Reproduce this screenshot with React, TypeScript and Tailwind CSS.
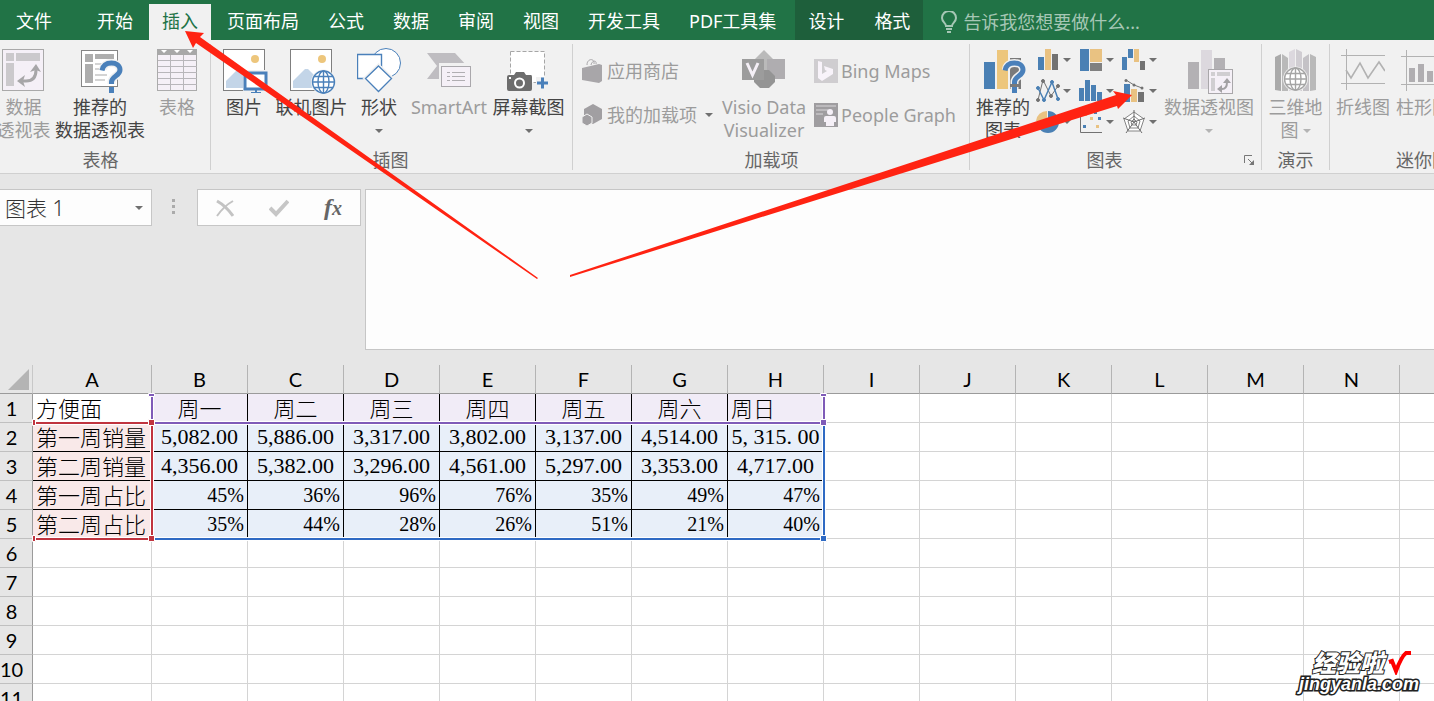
import type { ReactNode } from "react";
import { clsx } from "clsx";

const tabs = ["开始", "插入", "页面布局", "公式", "数据", "审阅", "视图", "开发工具", "PDF工具集"];
const contextTabs = ["设计", "格式"];

const columns = ["A", "B", "C", "D", "E", "F", "G", "H", "I", "J", "K", "L", "M", "N", "O"];

const sheet = [
  ["方便面", "周一", "周二", "周三", "周四", "周五", "周六", "周日"],
  ["第一周销量", "5,082.00", "5,886.00", "3,317.00", "3,802.00", "3,137.00", "4,514.00", "5, 315. 00"],
  ["第二周销量", "4,356.00", "5,382.00", "3,296.00", "4,561.00", "5,297.00", "3,353.00", "4,717.00"],
  ["第一周占比", "45%", "36%", "96%", "76%", "35%", "49%", "47%"],
  ["第二周占比", "35%", "44%", "28%", "26%", "51%", "21%", "40%"],
];

const rowNumbers = [1, 2, 3, 4, 5, 6, 7, 8, 9, 10, 11];

function Caret({ muted = false }: { muted?: boolean }) {
  return (
    <svg width="8" height="4" viewBox="0 0 8 4" className="shrink-0" aria-hidden>
      <path d="M0 0H8L4 4Z" fill={muted ? "#b4b4b4" : "#707070"} />
    </svg>
  );
}

type BigButtonProps = {
  icon: ReactNode;
  lines: ReactNode[];
  muted?: boolean;
  className?: string;
};

function BigButton({ icon, lines, muted, className }: BigButtonProps) {
  return (
    <button
      type="button"
      className={clsx(
        "flex shrink-0 flex-col items-center pt-1 whitespace-nowrap leading-[23px]",
        muted ? "text-[#9c9c9c]" : "text-[#444444]",
        className,
      )}
    >
      <span className="flex h-12 items-start">{icon}</span>
      {lines.map((line, i) => (
        <span key={i} className="flex h-[23px] items-center justify-center gap-1">
          {line}
        </span>
      ))}
    </button>
  );
}

type GroupProps = {
  label: string;
  children: ReactNode;
  className?: string;
  launcher?: boolean;
};

function Group({ label, children, className, launcher }: GroupProps) {
  return (
    <section
      aria-label={label}
      className={clsx("relative flex h-[126px] shrink-0 flex-col border-r border-[#d0d0d0]", className)}
    >
      <div className="flex h-[102px] shrink-0">{children}</div>
      <p className="mt-1 text-center leading-5 text-[#666666]">{label}</p>
      {launcher && (
        <button type="button" aria-label="图表选项" className="absolute right-[6px] bottom-1">
          <svg width="11" height="11" viewBox="0 0 11 11" fill="none" stroke="#777">
            <path d="M.5 8V.5H8M4 4l4.500 4.500" />
            <path d="M10 5v5H5Z" fill="#777" stroke="none" />
          </svg>
        </button>
      )}
    </section>
  );
}

function PivotIcon() {
  return (
    <svg width="43" height="44" viewBox="0 0 43 44">
      <rect x=".5" y="1.500" width="41" height="41" fill="#f5f0f7" stroke="#a9a9a9" />
      <path d="M4 5h8v8H4zM14 5h24v8H14zM4 15h8v23H4z" fill="#cbc9cc" />
      <path d="M20 33h4c7 0 10-4 10-11" fill="none" stroke="#a7a6a8" strokeWidth="3" />
      <path d="M15 33l8-6-2 6 2 6zM34 16l-6 8 6-2 5 2z" fill="#a7a6a8" />
    </svg>
  );
}

function QuestionMark({ x, y }: { x: number; y: number }) {
  return (
    <g transform={`translate(${x} ${y})`} fill="none">
      <path d="M3 10C3 5 7 3 11.500 3S20 5.500 20 10c0 6-8.500 6-8.500 12v2M11.500 27v6" stroke="#f1f1f1" strokeWidth="8" />
      <path d="M2 10.500C3 5 7 3 11.500 3S20 5.500 20 10c0 6-8.500 6-8.500 12v2" stroke="#4a80ba" strokeWidth="5" />
      <path d="M9 27h5v6H9z" fill="#4a80ba" />
    </g>
  );
}

function RecommendedPivotIcon() {
  return (
    <svg width="40" height="46" viewBox="0 0 40 46" className="overflow-visible">
      <rect x="1.500" y="2.500" width="36" height="36" fill="#fff" stroke="#858585" />
      <path d="M5 6h8v8H5zM15 6h19v5H15zM5 16h8v19H5z" fill="#adadad" />
      <path d="M15 16h16M15 21h12M15 27h12M15 32h10" stroke="#d4d4d4" strokeWidth="2" />
      <QuestionMark x={20} y={12} />
    </svg>
  );
}

function TableIcon() {
  return (
    <svg width="41" height="44" viewBox="0 0 41 44">
      <rect x=".5" y="1.500" width="39" height="41" fill="#f5f0f7" stroke="#ababab" />
      <path d="M0 1h40v6H0z" fill="#a8a8a8" />
      <path d="M4 2h6L7 5zM17 2h6l-3 3zM30 2h6l-3 3z" fill="#fff" />
      <path d="M1 12.500h39M1 18.500h39M1 24.500h39M1 30.500h39M1 36.500h39M13.500 7v35M26.500 7v35" stroke="#b8b6ba" />
    </svg>
  );
}

function Landscape() {
  return (
    <>
      <rect x=".5" y="1.500" width="41" height="41" fill="#fff" stroke="#7f7f7f" />
      <path d="M3 40V33L15 21l3 0L31 34v6z" fill="#c3d5e8" />
      <circle cx="32" cy="11" r="4" fill="#edc67c" />
    </>
  );
}

function PictureIcon() {
  return (
    <svg width="42" height="46" viewBox="0 0 42 46" className="overflow-visible">
      <Landscape />
      <path d="M20 22h26v23H20z" fill="#f1f1f1" />
      <path d="M22 25h21v16H22z" fill="#fff" stroke="#4a80ba" strokeWidth="3" />
      <path d="M32 41h2v3h4v1H28v-1h4z" fill="#4a80ba" />
    </svg>
  );
}

function Globe({ cx, cy, r, color }: { cx: number; cy: number; r: number; color: string }) {
  return (
    <g fill="none" stroke={color} strokeWidth="1.400">
      <circle cx={cx} cy={cy} r={r + 1.5} fill="#f1f1f1" stroke="none" />
      <circle cx={cx} cy={cy} r={r} fill="#fff" />
      <ellipse cx={cx} cy={cy} rx={r / 2} ry={r} />
      <path d={`M${cx - r} ${cy}h${2 * r}M${cx} ${cy - r}v${2 * r}M${cx - r + 1.5} ${cy - r / 2}h${2 * r - 3}M${cx - r + 1.5} ${cy + r / 2}h${2 * r - 3}`} />
    </g>
  );
}

function OnlinePictureIcon() {
  return (
    <svg width="44" height="46" viewBox="0 0 44 46" className="overflow-visible">
      <Landscape />
      <Globe cx={33.5} cy={34} r={11} color="#4a80ba" />
    </svg>
  );
}

function ShapesIcon() {
  return (
    <svg width="44" height="46" viewBox="0 0 44 46" fill="#fff" stroke="#4a80ba">
      <circle cx="29" cy="15" r="14.500" />
      <path d="M.5 6.500h24v24H.5z" strokeWidth="1.400" />
      <path d="M21.500 15.500L37 30.500 21.500 46 6 30.500z" fill="#f1f1f1" stroke="#f1f1f1" />
      <path d="M21.500 18L34.500 30.500 21.500 43.500 8.500 30.500z" strokeWidth="1.300" />
    </svg>
  );
}

function SmartArtIcon() {
  return (
    <svg width="45" height="44" viewBox="0 0 45 44">
      <path d="M0 5h28l12 13-12 13H0l10-13z" fill="#bfbdc1" />
      <path d="M12 15h34v26H12z" fill="#f1f1f1" />
      <rect x="14.500" y="18.500" width="29" height="20" fill="#f5f0f7" stroke="#aaa8ac" />
      <path d="M20 24.500h3M20 28.500h3M20 32.500h3M25 24.500h13M25 28.500h13M25 32.500h13" stroke="#b0aeb2" />
    </svg>
  );
}

function ScreenshotIcon() {
  return (
    <svg width="43" height="44" viewBox="0 0 43 44">
      <rect x="3.500" y="3.500" width="34" height="31" fill="#fff" stroke="#a6a6a6" strokeDasharray="4 2" />
      <path d="M29 29h14v15H29z" fill="#f1f1f1" />
      <path d="M0 29q0-2 2-2h5l2-3h8l2 3h5q1 0 1 2v12q0 2-2 2H2q-2 0-2-2z" fill="#6d6d6d" />
      <circle cx="12.500" cy="35" r="4.500" fill="#6d6d6d" stroke="#fff" strokeWidth="2" />
      <path d="M2 29h2v2H2z" fill="#fff" />
      <path d="M30 35h11M35.500 29.500v11" stroke="#4a80ba" strokeWidth="3" />
    </svg>
  );
}

function StoreIcon() {
  return (
    <svg width="21" height="26" viewBox="0 0 21 26">
      <path d="M5 7c0-7 8-7 7-1M9 7c1-5 6-5 5-1" fill="none" stroke="#a8a6a9" />
      <path d="M0 10l17-4 3 1v16l-3 2-17-3z" fill="#a8a6a9" />
    </svg>
  );
}

function AddInIcon() {
  return (
    <svg width="21" height="24" viewBox="0 0 21 24" fill="#a19fa2">
      <path d="M11 1l9 5v10l-9 5-9-5V6z" />
      <path d="M5 11l5 3v6l-5 3-5-3v-6z" stroke="#f1f1f1" />
    </svg>
  );
}

function VisioIcon() {
  return (
    <svg width="44" height="42" viewBox="0 0 44 42">
      <path d="M22 2l12 12-12 12-12-12z" fill="#bababa" />
      <path d="M25 11h18v20H25z" fill="#afadb0" />
      <path d="M18 22h9l6 6v6l-6 6h-9l-6-6v-6z" fill="#949494" />
      <path d="M0 11h22v21H0z" fill="#9c9c9c" />
      <path d="M5 15l5.500 12L16 15" fill="none" stroke="#f5f0f7" strokeWidth="3" />
    </svg>
  );
}

function BingIcon() {
  return (
    <svg width="24" height="24" viewBox="0 0 24 24">
      <path d="M0 0h24v24H0z" fill="#cfcdd0" />
      <path d="M4 2l4 1v12l5-3-2-1-1-4 9 3v5L8 22l-4-3z" fill="#f8f3fa" />
    </svg>
  );
}

function PeopleGraphIcon() {
  return (
    <svg width="24" height="24" viewBox="0 0 24 24">
      <path d="M0 0h24v24H0z" fill="#9f9da0" />
      <path d="M2 2h20v2H2zM2 6h12v2H2zM2 10h7v2H2z" fill="#bcbabd" />
      <circle cx="16" cy="9" r="3" fill="#f5f0f7" />
      <path d="M12 13h8q2 0 2 2v4h-2v4h-8v-4h-2v-4q0-2 2-2z" fill="#f5f0f7" />
    </svg>
  );
}

function RecommendedChartIcon() {
  return (
    <svg width="40" height="46" viewBox="0 0 40 46" className="overflow-visible">
      <path d="M1 14h11v27H1z" fill="#4a80b4" />
      <path d="M14 2h11v39H14z" fill="#edc67c" />
      <path d="M27 10h11v31H27z" fill="#7a7a7a" />
      <QuestionMark x={20} y={12} />
    </svg>
  );
}

const chartKinds: { name: string; art: ReactNode }[] = [
  {
    name: "柱形图",
    art: (
      <>
        <path d="M1 9h6v13H1z" fill="#4a80b4" />
        <path d="M8 1h6v21H8z" fill="#e9c282" />
        <path d="M15 6h6v16h-6z" fill="#727272" />
      </>
    ),
  },
  {
    name: "树状图",
    art: (
      <>
        <path d="M0 1h9v22H0z" fill="#4a80b4" />
        <path d="M10 1h12v13H10z" fill="#e9c282" />
        <path d="M10 15h12v8H10z" fill="#808080" />
      </>
    ),
  },
  {
    name: "瀑布图",
    art: (
      <>
        <path d="M-1 9h5v13h-5zM5 1h5v9H5z" fill="#4a80b4" />
        <path d="M11 1h5v13h-5z" fill="#e9c282" />
        <path d="M17 13h5v9h-5z" fill="#727272" />
      </>
    ),
  },
  {
    name: "折线图",
    art: (
      <>
        <g fill="#727272" stroke="#727272">
          <path d="M1 21L6 1l8 16 7-10" fill="none" />
          <circle cx="1" cy="21" r="1.500" /><circle cx="6" cy="2" r="1.500" /><circle cx="14" cy="17" r="1.500" /><circle cx="21" cy="7" r="1.500" />
        </g>
        <g fill="#4a80b4" stroke="#4a80b4">
          <path d="M1 9l6 12 8-18 6 17" fill="none" strokeWidth="1.500" />
          <circle cx="1" cy="9" r="1.500" /><circle cx="7" cy="21" r="1.500" /><circle cx="15" cy="3" r="1.500" /><circle cx="21" cy="20" r="1.500" />
        </g>
      </>
    ),
  },
  {
    name: "直方图",
    art: <path d="M-1 9h5v13h-5zM5 1h5v21H5zM11 6h5v16h-5zM17 13h5v9h-5z" fill="#4a80b4" />,
  },
  {
    name: "组合图",
    art: (
      <>
        <path d="M1 5h6v18H1z" fill="#4a80b4" />
        <path d="M8 10h6v13H8z" fill="#e9c282" />
        <path d="M15 13h6v10h-6z" fill="#727272" />
        <path d="M3 1l8 5 8 3" fill="none" stroke="#727272" />
        <g fill="#727272"><circle cx="3" cy="1.500" r="1.500" /><circle cx="11" cy="6" r="1.500" /><circle cx="19" cy="9" r="1.500" /></g>
      </>
    ),
  },
  {
    name: "饼图",
    art: (
      <>
        <path d="M11 1a11 11 0 1 1-11 11h11z" fill="#4a80b4" />
        <path d="M10 11H-1A11 11 0 0 1 10 1z" fill="#e9c282" />
      </>
    ),
  },
  {
    name: "散点图",
    art: (
      <>
        <path d="M.5 1v21.500H22" fill="none" stroke="#727272" />
        <path d="M14 1h3v3h-3zM3 15h3v3H3zM18 7h3v3h-3z" fill="#4a80b4" />
        <path d="M4 3h3v3H4zM10 7h3v3h-3zM16 15h3v3h-3z" fill="#e9c282" />
      </>
    ),
  },
  {
    name: "雷达图",
    art: (
      <g fill="none" stroke="#858585">
        <path d="M11 2l10 7-4 12H5L1 9z" fill="#fff" />
        <path d="M11 6l6 5-2 7H7l-2-7zM11 9l3 3-1 3H9l-1-3z" />
        <path d="M11 0v12L0 8M11 12l11-4M11 12L3 23M11 12l8 11" stroke="#6b6b6b" />
      </g>
    ),
  },
];

function PivotChartIcon() {
  return (
    <svg width="42" height="46" viewBox="0 0 42 46" className="overflow-visible">
      <path d="M0 14h11v27H0z" fill="#b3b1b4" />
      <path d="M13 2h11v39H13z" fill="#dcd8de" />
      <path d="M26 10h11v31H26z" fill="#b3b1b4" />
      <rect x="20.500" y="21.500" width="24" height="24" fill="#f5f0f7" stroke="#a9a7aa" />
      <path d="M23 24h4v4h-4zM29 24h13v4H29zM23 30h4v13h-4z" fill="#d0ced1" />
      <path d="M31 41h3c4 0 5-3 5-7" fill="none" stroke="#a3a1a4" strokeWidth="2" />
      <path d="M29 41l5-4v8zM39 30l-4 5h8z" fill="#a3a1a4" />
    </svg>
  );
}

function MapIcon() {
  return (
    <svg width="42" height="44" viewBox="0 0 42 44">
      <path d="M0 9l6-3v37l-6-1z" fill="#aaa" /><path d="M7 6l6 4v33H7z" fill="#b9b9b9" />
      <path d="M14 4l6-3v42h-6z" fill="#dcd8de" /><path d="M21 1l6 3v39h-6z" fill="#d0cdd2" />
      <path d="M28 10l6-4v37h-6z" fill="#c4c2c6" /><path d="M35 6l6 3v33l-6 1z" fill="#b9b9b9" />
      <Globe cx={20.5} cy={31} r={11} color="#a5a5a5" />
    </svg>
  );
}

function SparkLineIcon() {
  return (
    <svg width="44" height="44" viewBox="0 0 44 44" fill="none" stroke="#b2b2b2">
      <path d="M0 7.500h44M0 35.500h44M5.500 1v41" />
      <path d="M5 22l5 8 9-15 8 15 11-16 6 9" strokeWidth="1.600" />
    </svg>
  );
}

function SparkColumnIcon() {
  return (
    <svg width="44" height="44" viewBox="0 0 44 44" fill="none" stroke="#b2b2b2">
      <path d="M0 8.500h44M0 36.500h44M5.500 2v41" />
      <path d="M8 20h6v14H8zM17 16h6v18h-6zM26 23h6v11h-6z" fill="#b0aeb1" stroke="none" />
    </svg>
  );
}

function TabBar() {
  return (
    <nav className="flex h-10 shrink-0 items-end overflow-hidden bg-[#217346] leading-[22px] text-white">
      <button type="button" className="h-9 w-[84px] shrink-0 pr-4 pb-[2px]">文件</button>
      <div className="flex gap-[3px]">
        {tabs.map((tab) => (
          <button
            key={tab}
            type="button"
            className={clsx("h-9 shrink-0 px-[13px] pb-[2px]", tab === "插入" && "bg-[#f1f1f1] text-[#217346]")}
          >
            {tab}
          </button>
        ))}
      </div>
      <div className="ml-[6px] flex h-10 shrink-0 items-end gap-1 bg-[#1e5f3b]">
        {contextTabs.map((tab) => (
          <button key={tab} type="button" className="h-9 px-[13px] pb-[2px]">{tab}</button>
        ))}
      </div>
      <label className="ml-[18px] flex h-9 items-center gap-[6px]">
        <svg width="16" height="22" viewBox="0 0 16 22" fill="none" stroke="#a6c7b5" strokeWidth="2" aria-hidden>
          <path d="M5 15c0-3-4-4-4-8a7 7 0 0 1 14 0c0 4-4 5-4 8z" />
          <path d="M5 18h6M6 21h4" />
        </svg>
        <input
          aria-label="操作说明搜索"
          placeholder="告诉我您想要做什么..."
          className="w-[200px] bg-transparent outline-none placeholder:text-[#a6c7b5]"
        />
      </label>
    </nav>
  );
}

function Ribbon() {
  return (
    <div className="flex h-[134px] shrink-0 overflow-hidden border-b border-[#d0d0d0] bg-[#f1f1f1] pt-1">
      <Group label="表格" className="w-[211px] pr-[9px]">
        <BigButton muted className="w-[47px]" icon={<PivotIcon />} lines={["数据", "透视表"]} />
        <BigButton className="w-[106px]" icon={<RecommendedPivotIcon />} lines={["推荐的", "数据透视表"]} />
        <BigButton muted className="w-12" icon={<TableIcon />} lines={["表格"]} />
      </Group>

      <Group label="插图" className="w-[362px] pr-1 pl-[2px]">
        <BigButton className="w-[62px]" icon={<PictureIcon />} lines={["图片"]} />
        <BigButton className="w-[73px]" icon={<OnlinePictureIcon />} lines={["联机图片"]} />
        <BigButton className="w-[62px]" icon={<ShapesIcon />} lines={["形状", <Caret />]} />
        <BigButton muted className="w-[78px]" icon={<SmartArtIcon />} lines={["SmartArt"]} />
        <BigButton className="w-[81px]" icon={<ScreenshotIcon />} lines={["屏幕截图", <Caret />]} />
      </Group>

      <Group label="加载项" className="w-[397px] pr-2 pl-[9px] text-[#9c9c9c]">
        <div className="flex w-[134px] shrink-0 flex-col pt-[5px]">
          <button type="button" className="flex h-11 items-center gap-1 whitespace-nowrap"><StoreIcon />应用商店</button>
          <button type="button" className="flex h-11 items-center gap-1 whitespace-nowrap">
            <AddInIcon />我的加载项<span className="pl-1"><Caret /></span>
          </button>
        </div>
        <BigButton muted className="w-24" icon={<VisioIcon />} lines={["Visio Data", "Visualizer"]} />
        <div className="flex flex-col pt-[5px] pl-[2px]">
          <button type="button" className="flex h-11 items-center gap-[3px] whitespace-nowrap"><BingIcon />Bing Maps</button>
          <button type="button" className="flex h-11 items-center gap-[3px] whitespace-nowrap"><PeopleGraphIcon />People Graph</button>
        </div>
      </Group>

      <Group label="图表" launcher className="w-[292px] pr-[22px]">
        <BigButton className="ml-[3px] w-[60px]" icon={<RecommendedChartIcon />} lines={["推荐的", "图表"]} />
        <div className="ml-1 grid w-[129px] shrink-0 grid-cols-3 content-start">
          {chartKinds.map((kind) => (
            <button key={kind.name} type="button" aria-label={kind.name} className="flex h-[31px] items-center gap-1">
              <svg width="22" height="24" viewBox="0 0 22 24" className="overflow-visible">{kind.art}</svg>
              <Caret />
            </button>
          ))}
        </div>
        <BigButton muted className="-ml-1 w-[94px]" icon={<PivotChartIcon />} lines={["数据透视图", <Caret muted />]} />
      </Group>

      <Group label="演示" className="w-[68px] items-center">
        <BigButton muted className="w-[66px]" icon={<MapIcon />} lines={["三维地", <>图<Caret muted /></>]} />
      </Group>

      <Group label="迷你图" className="w-[185px] pl-[2px]">
        <BigButton muted className="w-[62px]" icon={<SparkLineIcon />} lines={["折线图"]} />
        <BigButton muted className="w-[58px]" icon={<SparkColumnIcon />} lines={["柱形图"]} />
      </Group>
    </div>
  );
}

function FormulaBar() {
  return (
    <div className="flex shrink-0 items-start py-[15px]">
      <div className="flex h-[37px] w-[152px] shrink-0 items-center border border-l-0 border-[#c6c6c6] bg-[#fdfdfd] pr-2 pl-[5px]">
        <input aria-label="名称框" defaultValue="图表 1" className="w-full min-w-0 bg-transparent text-[21px] font-light text-[#333333] outline-none" />
        <Caret />
      </div>
      <svg width="45" height="37" viewBox="0 0 45 37" fill="#ababab" className="shrink-0" aria-hidden>
        <path d="M20 10h3v3h-3zM20 16h3v3h-3zM20 22h3v3h-3z" />
      </svg>
      <div className="flex h-[37px] w-[164px] shrink-0 items-center justify-between border border-[#c6c6c6] bg-[#fdfdfd] px-[18px]">
        <button type="button" aria-label="取消">
          <svg width="18" height="18" viewBox="0 0 18 18" fill="none" stroke="#c3c3c3">
            <path d="M1 2q9 5 16 15" strokeWidth="3" /><path d="M17 2Q8 7 1 17" strokeWidth="2" />
          </svg>
        </button>
        <button type="button" aria-label="输入">
          <svg width="20" height="18" viewBox="0 0 20 18" fill="none" stroke="#c6c6c6" strokeWidth="4">
            <path d="M1 9l6 6L19 2" />
          </svg>
        </button>
        <button type="button" aria-label="插入函数" className="font-['Liberation_Serif',serif] text-2xl leading-6 font-bold text-[#666666] italic">
          f<span className="text-xl">x</span>
        </button>
      </div>
      <textarea aria-label="编辑栏" className="ml-1 block h-[161px] min-w-0 flex-1 resize-none border border-r-0 border-[#c6c6c6] bg-[#fdfdfd] outline-none" />
    </div>
  );
}

function cellClass(row: number, col: number) {
  if (row > 4 || col > 7) return "border-[#d4d4d4]";

  const borders = clsx(
    row > 0 ? "border-b-black" : "border-b-[#d4d4d4]",
    col > 0 ? "border-r-black" : "border-r-[#d4d4d4]",
  );
  if (col === 0) {
    return clsx(borders, "pl-[3px] text-left text-[22px] leading-7 font-light", row > 0 && "bg-[#f9e9e9]");
  }
  if (row === 0) {
    return clsx(borders, "bg-[#f1ecf7] text-[22px] leading-7 font-light", col === 7 ? "pl-[3px] text-left" : "text-center");
  }
  return clsx(
    borders,
    "bg-[#e8eff9] font-['Liberation_Serif',serif] leading-7",
    row > 2 ? "pr-[3px] text-right text-xl" : "text-center text-[22px]",
  );
}

function Sheet() {
  return (
    <div className="relative">
      <table className="w-[1496px] table-fixed border-separate border-spacing-0 bg-white text-black">
        <colgroup>
          <col className="w-[33px]" />
          <col className="w-[119px]" />
          {columns.slice(1).map((name) => <col key={name} className="w-24" />)}
        </colgroup>
        <thead>
          <tr className="h-[29px] bg-[#e6e6e6] font-['Lato',sans-serif] text-xl leading-7">
            <th className="border-r border-b border-[#9b9b9b] border-r-[#c8c8c8] p-0">
              <svg width="21" height="21" viewBox="0 0 21 21" className="ml-2" aria-hidden>
                <path d="M21 0v21H0z" fill="#b4b4b4" />
              </svg>
            </th>
            {columns.map((name) => (
              <th key={name} scope="col" className="border-r border-b border-[#9b9b9b] border-r-[#b4b4b4] p-0 font-normal">
                {name}
              </th>
            ))}
          </tr>
        </thead>
        <tbody>
          {rowNumbers.map((num, row) => (
            <tr key={num} className="h-[29px]">
              <th scope="row" className="border-r border-b border-r-[#9b9b9b] border-b-[#c0c0c0] bg-[#e6e6e6] p-0 pr-[9px] font-['Lato',sans-serif] text-xl leading-7 font-normal">
                {num}
              </th>
              {columns.map((name, col) => (
                <td key={name} className={clsx("overflow-hidden border-r border-b p-0 whitespace-nowrap", cellClass(row, col))}>
                  {sheet[row]?.[col]}
                </td>
              ))}
            </tr>
          ))}
        </tbody>
      </table>

      {/* coloured outlines of the chart's source ranges */}
      <svg width="860" height="190" viewBox="0 0 860 190" fill="none" className="pointer-events-none absolute top-0 left-0" aria-hidden>
        <path d="M152 30V58H824V30M34 58H152V174H34M152 174H824V58" stroke="#fff" strokeWidth="4" />
        <path d="M152 174H824V58" stroke="#2f6ac4" strokeWidth="2" />
        <path d="M152 30V58H824V30" stroke="#7f5bb8" strokeWidth="2" />
        <path d="M34 58H152V174H34" stroke="#c0343f" strokeWidth="2" />
        <g stroke="#fff">
          <path d="M148.500 54.500h6v6h-6zM148.500 170.500h6v6h-6zM32.500 54.500h3v6h-3zM32.500 170.500h3v6h-3z" fill="#c0343f" />
          <path d="M820.500 54.500h6v6h-6zM148.500 28.500h6v3h-6zM820.500 28.500h6v3h-6z" fill="#7f5bb8" />
          <path d="M820.500 170.500h6v6h-6z" fill="#2f6ac4" />
        </g>
      </svg>
    </div>
  );
}

export default function App() {
  return (
    <div className="relative flex h-screen flex-col overflow-hidden bg-[#e6e6e6] font-['Noto_Sans','Noto_Sans_CJK_SC',sans-serif] text-lg leading-6">
      <TabBar />
      <Ribbon />
      <FormulaBar />
      <Sheet />

      <svg className="pointer-events-none absolute inset-0 h-full w-full" fill="#ff2312" aria-hidden>
        <path d="M185 31l19 2-4 4 338 241-1 1L196 43l-3 5z" />
        <path d="M1132 95l-19-4 3 4L570 275v2l547-171 1 3z" />
      </svg>

      <div className="absolute right-[15px] bottom-2 flex flex-col items-end font-black text-white">
        <p className="flex items-center gap-1 pr-2 text-2xl leading-6 italic [paint-order:stroke_fill] [-webkit-text-stroke:2px_#222]">
          经验啦
          <svg width="23" height="24" viewBox="0 0 23 24" fill="none" stroke="#ff0000" strokeWidth="4" aria-hidden>
            <path d="M1 11l3-1 4 10C11 12 14 5 18 2h5" />
          </svg>
        </p>
        <p className="font-['Liberation_Sans',sans-serif] text-lg leading-[18px] font-bold italic [paint-order:stroke_fill] [-webkit-text-stroke:3px_#222]">
          jingyanla.com
        </p>
      </div>
    </div>
  );
}
